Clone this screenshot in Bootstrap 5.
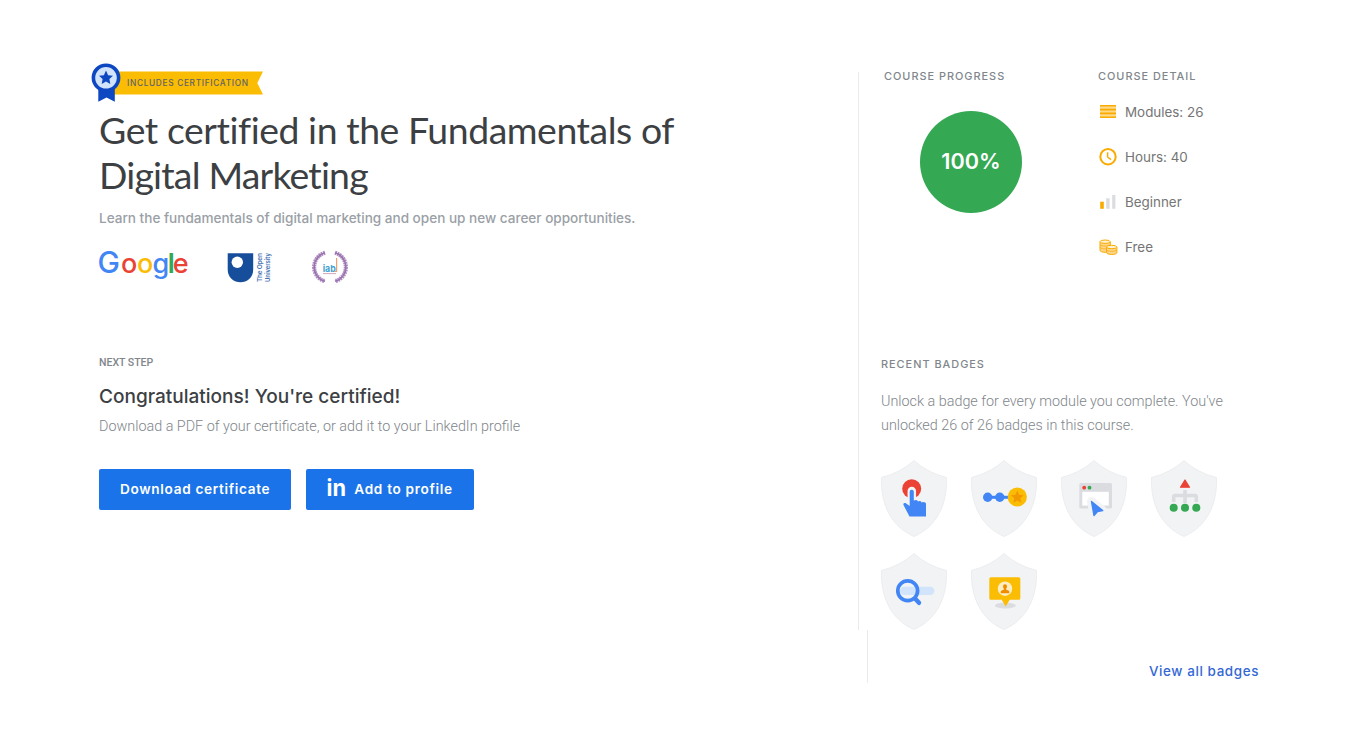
<!DOCTYPE html>
<html lang="en">
<head>
  <meta charset="UTF-8" />
  <meta name="viewport" content="width=device-width, initial-scale=1" />
  <title>Fundamentals of Digital Marketing</title>
  <link href="https://cdn.jsdelivr.net/npm/bootstrap@5.3.3/dist/css/bootstrap.min.css" rel="stylesheet" />
  <style>
  body { font-family: Inter, "Liberation Sans", sans-serif; color: #3c4043; background: #fff; }
  svg { overflow: visible; }
  .course-page { padding: 72px 97px 0 99px; }
  .course-main { height: 558px; }
  .course-left { width: 759px; }
  .course-right { border-left: 1px solid #e8eaed; }

  .ribbon { width: 174px; height: 40px; margin: -9px 0 0 -8px; }
  .course-title { font-family: Lato, sans-serif; font-size: 37.4px; line-height: 45px; font-weight: 400; letter-spacing: -.44px; font-variant-ligatures: none; margin: 4px 0 0; }
  .title-end { letter-spacing: -.8px; }
  .course-sub { font-size: 13.55px; line-height: 20px; font-weight: 500; color: #9aa0a6; margin: 11px 0 0; }
  .partners { height: 40px; margin-top: 19px; }
  .next-label { font: 500 10.5px/14px Roboto, sans-serif; color: #80868b; margin: 69px 0 0; }
  .next-title { font-size: 19.05px; line-height: 26px; font-weight: 500; margin: 14px 0 0; }
  .light-text { font: 300 14.37px/24px Roboto, sans-serif; color: #80868b; margin: 0; }
  .next-text { margin-top: 5px; }
  .next-actions { margin-top: 30px; gap: 15px; }

  .btn-cert { background: #1a73e8; color: #fff; border: 0; border-radius: 2px; height: 41px; padding: 0 21px 1px; font-size: 13.6px; font-weight: 600; letter-spacing: .68px; }
  .btn-cert:hover { background: #1765cc; color: #fff; }

  .section-label { font-size: 10.9px; line-height: 14px; font-weight: 500; letter-spacing: 1px; color: #80868b; margin: 0; }
  .top-panel { height: 288px; margin-top: -3px; }
  .progress-col { width: 214px; margin-left: 25px; }
  .progress-disc { width: 102px; height: 102px; border-radius: 50%; background: #34a853; color: #fff; font-size: 21.6px; font-weight: 600; margin: 27.5px 0 0 36px; }
  .detail-list { margin-top: 6.5px; }
  .detail-row { height: 45px; font-size: 13.4px; color: #757575; padding-top: 1px; }
  .detail-row svg { width: 20px; height: 20px; margin: -1px 7px 0 0; }
  .badge-panel { padding-left: 22px; }
  .badge-panel .light-text { margin-top: 18.5px; }
  .shield-grid { width: 360px; margin-top: 22px; }
  .shield-grid svg { width: 66px; height: 77px; margin: 0 24px 16px 0; }
  .course-foot { margin-left: 768px; height: 53px; border-left: 1px solid #e8eaed; }
  .view-all { font-size: 13.4px; line-height: 24px; font-weight: 500; letter-spacing: .62px; color: #3367d6; text-decoration: none; }
  </style>
</head>
<body>
  <main class="course-page">
    <div class="course-main d-flex">

      <!-- Course summary -->
      <section class="course-left">
        <svg class="ribbon d-block" viewBox="91 63 174 40">
          <path d="M108 71.5H263L257.3 83L263 94.6H108Z" fill="#fbbc04"/>
          <path d="M98.3 86H114.8V101.8L106.5 97.4L98.3 101.8Z" fill="#0d47c1"/>
          <circle cx="106" cy="77.8" r="12.6" fill="#d2e3fc" stroke="#0d47c1" stroke-width="3.6"/>
          <path d="M106 70.6L108.1 75.2L113 75.8L109.4 79.1L110.3 84L106 81.6L101.7 84L102.6 79.1L99 75.8L103.9 75.2Z" fill="#0d47c1"/>
          <text x="127" y="85.6" font-size="8.3" font-weight="500" fill="#5f6368" textLength="121">INCLUDES CERTIFICATION</text>
        </svg>
        <h1 class="course-title">Get certified in the Fundamentals of<br><span class="title-end">Digital Marketing</span></h1>
        <p class="course-sub">Learn the fundamentals of digital marketing and open up new career opportunities.</p>

        <div class="partners">
          <svg width="260" height="40" viewBox="99 247 260 40">
            <text y="273.4" font-size="27" font-weight="500"><tspan x="97.6" font-size="30" fill="#4285f4">G</tspan><tspan x="120.9" fill="#ea4335">o</tspan><tspan x="137" fill="#fbbc05">o</tspan><tspan x="152.6" fill="#4285f4">g</tspan><tspan x="167.8" font-weight="600" fill="#34a853">l</tspan><tspan x="172.8" fill="#ea4335">e</tspan></text>
            <!-- The Open University -->
            <path d="M227.7 253.2H253.2V269.5C253.2 286.5 227.7 286.5 227.7 269.5Z" fill="#174e9b"/>
            <circle cx="237.3" cy="262.2" r="5.7" fill="#fff"/>
            <g font-size="6.6" font-weight="600" fill="#4a74b4">
              <text transform="translate(262.3 282) rotate(-90)" textLength="29">The Open</text>
              <text transform="translate(270.3 282) rotate(-90)" textLength="29" lengthAdjust="spacingAndGlyphs">University</text>
            </g>
            <!-- iab -->
            <g fill="none" stroke="#9b72b0">
              <path d="M325 252.8C310.5 257 310.5 277 325 281.3M335 252.8C349.5 257 349.5 277 335 281.3" stroke-width="4.2" stroke-dasharray="1.7 .7" opacity=".8"/>
              <path d="M325 252.8C310.5 257 310.5 277 325 281.3M335 252.8C349.5 257 349.5 277 335 281.3" stroke-width="1.6"/>
            </g>
            <text x="322.7" y="271.5" font-size="9.5" font-weight="700" fill="#3f9fd0" textLength="13" lengthAdjust="spacingAndGlyphs">iab</text>
            <path d="M336.6 258V271.5H334.5" fill="none" stroke="#f0a070" stroke-width="1.2"/>
            <path d="M323 273.6H336" stroke="#d5a6b8" stroke-width="1"/>
          </svg>
        </div>

        <p class="next-label">NEXT STEP</p>
        <h2 class="next-title">Congratulations! You're certified!</h2>
        <p class="light-text next-text">Download a PDF of your certificate, or add it to your LinkedIn profile</p>
        <div class="next-actions d-flex">
          <button class="btn btn-cert" type="button">Download certificate</button>
          <button class="btn btn-cert d-flex align-items-center" type="button">
            <svg width="19" height="22" class="me-2"><text x="-.5" y="18" font-size="23" font-weight="700" fill="#fff" letter-spacing="0" textLength="19.5" lengthAdjust="spacingAndGlyphs">in</text></svg>
            Add to profile
          </button>
        </div>
      </section>

      <!-- Progress, details and badges -->
      <section class="course-right flex-grow-1">
        <div class="top-panel d-flex">
          <div class="progress-col">
            <h3 class="section-label">COURSE PROGRESS</h3>
            <div class="progress-disc d-flex align-items-center justify-content-center">100%</div>
          </div>
          <div>
            <h3 class="section-label">COURSE DETAIL</h3>
            <div class="detail-list">
              <div class="detail-row d-flex align-items-center">
                <svg viewBox="1098 102 20 20"><path d="M1100 105H1116V118H1100Z" fill="#fdd98a"/><path d="M1100 105.8H1116M1100 109.6H1116M1100 113.4H1116M1100 117.2H1116" stroke="#f9ab00" stroke-width="1.6"/></svg>
                Modules: 26
              </div>
              <div class="detail-row d-flex align-items-center">
                <svg viewBox="1098 147 20 20"><circle cx="1108" cy="156.7" r="7.7" fill="none" stroke="#f9ab00" stroke-width="2"/><path d="M1107.6 152.2V157L1111 159.6" fill="none" stroke="#f9ab00" stroke-width="1.5"/></svg>
                Hours: 40
              </div>
              <div class="detail-row d-flex align-items-center">
                <svg viewBox="1098 192 20 20"><path d="M1100.2 201.7H1103.8V208.8H1100.2Z" fill="#f9ab00"/><path d="M1106.2 198.2H1109.6V208.8H1106.2ZM1112.2 195H1115.4V208.8H1112.2Z" fill="#dadce0"/></svg>
                Beginner
              </div>
              <div class="detail-row d-flex align-items-center">
                <svg viewBox="1098 237 20 20" fill="#fdd48a" stroke="#f9ab00" stroke-width="1">
                  <path d="M1100 241.8V250.2C1100 253 1110.3 253 1110.3 250.2V241.8"/>
                  <path d="M1100 244.5C1101 246.6 1109 246.6 1110.3 244.5M1100 247.3C1101 249.4 1109 249.4 1110.3 247.3" fill="none" stroke-width=".7"/>
                  <ellipse cx="1105.1" cy="241.7" rx="5.1" ry="1.7" fill="#fff3d6"/>
                  <path d="M1106.6 247V252.6C1106.6 255.1 1116.9 255.1 1116.9 252.6V247"/>
                  <path d="M1106.6 249.8C1107.6 251.8 1115.6 251.8 1116.9 249.8" fill="none" stroke-width=".7"/>
                  <ellipse cx="1111.7" cy="247" rx="5.1" ry="1.7" fill="#fff3d6"/>
                </svg>
                Free
              </div>
            </div>
          </div>
        </div>

        <div class="badge-panel">
          <h3 class="section-label">RECENT BADGES</h3>
          <p class="light-text">Unlock a badge for every module you complete. You've<br>unlocked 26 of 26 badges in this course.</p>
          <div class="shield-grid d-flex flex-wrap">
            <svg viewBox="0 0 66 77">
              <path id="shield" d="M33 .5Q46 12.5 65.5 17.5C66.5 44 56 66.5 33 76.5C10 66.5-.5 44 .5 17.5Q20 12.5 33 .5Z" fill="#f1f3f4" stroke="#e8eaed" stroke-width=".8"/>
              <circle cx="30.7" cy="28.7" r="9.5" fill="#ea4335"/>
              <path d="M30.8 31V46" stroke="#f1f3f4" stroke-width="8.5" stroke-linecap="round"/>
              <path d="M28.7 31.7a2.05 2.05 0 0 1 4.1 0V40.5L35 40q1.8 0 2 1.5l1.5-.4q1.8 0 2 1.4l1.6-.4q2.9 0 2.9 2V56.6H28.5L22.5 45q-.5-2.5 2-2l4.2 3Z" fill="#4285f4"/>
            </svg>
            <svg viewBox="0 0 66 77">
              <use href="#shield"/>
              <path d="M16 37.3H40" stroke="#4285f4" stroke-width="3"/>
              <circle cx="16.7" cy="37.3" r="4.7" fill="#4285f4"/><circle cx="28.8" cy="37.3" r="4.7" fill="#4285f4"/>
              <circle cx="46.3" cy="37" r="9.6" fill="#fbbc04"/>
              <path d="M46.3 30.5L48.2 34.7L52.7 35.2L49.3 38.2L50.3 42.7L46.3 40.4L42.3 42.7L43.3 38.2L39.9 35.2L44.4 34.7Z" fill="#f29900"/>
            </svg>
            <svg viewBox="0 0 66 77">
              <use href="#shield"/>
              <rect x="18.3" y="23" width="32.7" height="25.6" rx="1.5" fill="#dadce0"/>
              <path d="M21.3 31.8H47.8V45.6H21.3Z" fill="#fff"/>
              <circle cx="23.2" cy="27.7" r="1.9" fill="#ea4335"/><circle cx="28.5" cy="27.7" r="1.9" fill="#34a853"/>
              <path d="M30.5 41.5L41.5 50.5L36.5 51.8L33.5 56Z" fill="#f1f3f4" stroke="#f1f3f4" stroke-width="9" stroke-linejoin="round"/>
              <path d="M30.5 41.5L41.7 50.5L36.5 51.5L33 55.5Z" fill="#4285f4" stroke="#4285f4" stroke-width="1.4" stroke-linejoin="round"/>
            </svg>
            <svg viewBox="0 0 66 77">
              <use href="#shield"/>
              <path d="M34 30V43M22.7 42V37Q22.7 35.5 24.2 35.5H43.8Q45.3 35.5 45.3 37V42" fill="none" stroke="#dadce0" stroke-width="3.6"/>
              <path d="M34 20L38.5 27.2H29.5Z" fill="#ea4335" stroke="#ea4335" stroke-width="1.2" stroke-linejoin="round"/>
              <g fill="#34a853"><circle cx="22.7" cy="47.8" r="4"/><circle cx="34" cy="47.8" r="4"/><circle cx="45.3" cy="47.8" r="4"/></g>
            </svg>
            <svg viewBox="0 0 66 77">
              <use href="#shield"/>
              <rect x="19" y="33.7" width="34.4" height="8.3" rx="4.15" fill="#d2e3fc"/>
              <path d="M34 45.5L38 49.8" stroke="#4285f4" stroke-width="4.4" stroke-linecap="round"/>
              <circle cx="26.7" cy="37.7" r="9.9" fill="none" stroke="#4285f4" stroke-width="3.7"/>
            </svg>
            <svg viewBox="0 0 66 77">
              <use href="#shield"/>
              <ellipse cx="34.3" cy="52.5" rx="10.5" ry="3" fill="#dadce0"/>
              <path d="M19.8 24.3H47.8Q49.3 24.3 49.3 25.8V45.3Q49.3 46.8 47.8 46.8H38.7L34.7 53.4L30.7 46.8H19.8Q18.3 46.8 18.3 45.3V25.8Q18.3 24.3 19.8 24.3Z" fill="#fbbc04"/>
              <circle cx="34" cy="35.7" r="7.2" fill="#feefc3"/>
              <path d="M29.7 40.3V38.5Q30 37.2 32.8 36.8V35.5Q32 34.5 32 33.3Q32 31.2 34 31.2Q36 31.2 36 33.3Q36 34.5 35.2 35.5V36.8Q38 37.2 38.3 38.5V40.3Z" fill="#f08c00"/>
            </svg>
          </div>
        </div>
      </section>
    </div>

    <div class="course-foot d-flex justify-content-end align-items-end">
      <a href="#" class="view-all">View all badges</a>
    </div>
  </main>

  <script src="https://cdn.jsdelivr.net/npm/bootstrap@5.3.3/dist/js/bootstrap.bundle.min.js"></script>
</body>
</html>
